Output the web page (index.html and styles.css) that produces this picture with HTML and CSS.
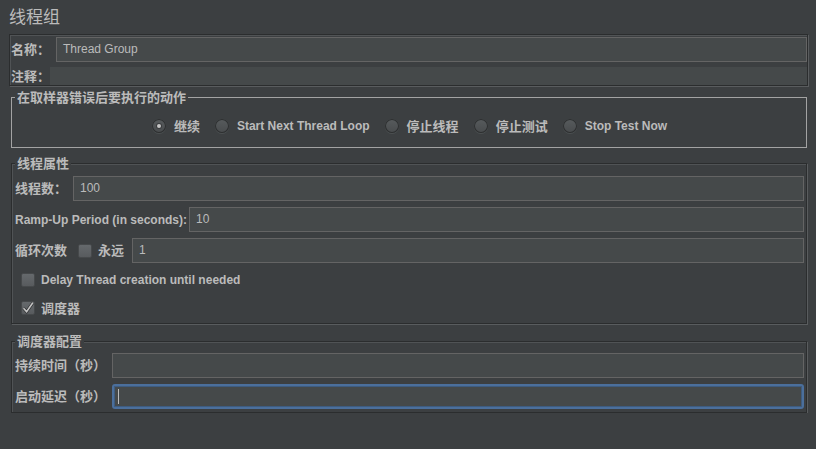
FILE: index.html
```html
<!DOCTYPE html>
<html lang="zh-CN">
<head>
<meta charset="UTF-8">
<title>线程组</title>
<link rel="stylesheet" href="styles.css">
</head>
<body>
<div class="page">
    <h1 class="title">线程组</h1>

    <div class="name-panel">
        <div class="row name-row">
            <span class="label name-label">名称：</span>
            <div class="field">Thread Group</div>
        </div>
        <div class="row comment-row">
            <span class="label comment-label">注释：</span>
            <div class="comment-field"></div>
        </div>
    </div>

    <fieldset class="group group-light on-error">
        <legend>在取样器错误后要执行的动作</legend>
        <div class="radio-row">
            <span class="option"><span class="radio on"></span><span class="cjk">继续</span></span>
            <span class="option"><span class="radio"></span><span class="en">Start Next Thread Loop</span></span>
            <span class="option"><span class="radio"></span><span class="cjk">停止线程</span></span>
            <span class="option"><span class="radio"></span><span class="cjk">停止测试</span></span>
            <span class="option"><span class="radio"></span><span class="en">Stop Test Now</span></span>
        </div>
    </fieldset>

    <fieldset class="group group-etched thread-props">
        <legend>线程属性</legend>
        <div class="row">
            <span class="label">线程数：</span>
            <div class="field">100</div>
        </div>
        <div class="row">
            <span class="en ramp-label">Ramp-Up Period (in seconds):</span>
            <div class="field">10</div>
        </div>
        <div class="row">
            <span class="label">循环次数</span>
            <span class="check loop-check"></span>
            <span class="label forever">永远</span>
            <div class="field">1</div>
        </div>
        <div class="check-row delay-row">
            <span class="check"></span>
            <span class="en">Delay Thread creation until needed</span>
        </div>
        <div class="check-row scheduler-row">
            <span class="check checked">
                <svg width="14" height="14" viewBox="0 0 14 14">
                    <path d="M2.5 7.2 L5.6 10.6 L11.8 1.8" fill="none" stroke="#2e3031" stroke-width="3"/>
                    <path d="M2.5 7.2 L5.6 10.6 L11.8 1.8" fill="none" stroke="#c4c4c4" stroke-width="1.6"/>
                </svg>
            </span>
            <span class="cjk">调度器</span>
        </div>
    </fieldset>

    <fieldset class="group group-etched scheduler">
        <legend>调度器配置</legend>
        <div class="row">
            <span class="label">持续时间（秒）</span>
            <div class="field"></div>
        </div>
        <div class="row">
            <span class="label">启动延迟（秒）</span>
            <div class="field focused"><span class="caret"></span></div>
        </div>
    </fieldset>
</div>
</body>
</html>
```

FILE: styles.css
```css
body {
    margin: 0;
    background-color: #3c3f41;
    color: #bbbbbb;
    font-family: "Noto Sans CJK SC", "Liberation Sans", sans-serif;
    font-size: 13px;
    font-weight: bold;
}
.page {
    width: 799px;
    padding: 5px 0 0 9px;
}
.title {
    margin: 0 0 7px 0;
    font-size: 17px;
    font-weight: normal;
    line-height: 22px;
}

/* panel nombre / comentario */
.name-panel {
    border: 1px solid #2b2d2e;
    box-shadow: 1px 1px 0 #595c5e, inset 1px 1px 0 #505355;
    padding: 2px 0 0 1px;
}
.row {
    display: flex;
    align-items: center;
    gap: 6px;
    height: 25px;
}
.name-row {
    gap: 0;
}
.name-label {
    width: 45px;
}
.comment-row {
    height: 18px;
    margin-top: 5px;
    gap: 0;
}
.comment-label {
    width: 39px;
}
.comment-field {
    flex: 1;
    height: 18px;
    background-color: #45494a;
}
/* el texto CJK queda algo bajo, se sube un poco */
.label,
.cjk {
    white-space: nowrap;
    padding-bottom: 2px;
}
.en {
    font-family: "Liberation Sans", "Noto Sans CJK SC", sans-serif;
    font-size: 12px;
    white-space: nowrap;
}
.ramp-label {
    width: 168px;
}
.field {
    flex: 1;
    box-sizing: border-box;
    height: 25px;
    background-color: #45494a;
    border: 1px solid #646464;
    padding: 0 6px;
    line-height: 23px;
    font-family: "Liberation Sans", sans-serif;
    font-size: 12px;
    font-weight: normal;
    color: #bbbbbb;
}
.field.focused {
    border: 2px solid #4b6f9c;
    border-radius: 3px;
    box-shadow: inset 0 0 0 1px #3e5c80;
    padding: 0 4px;
    display: flex;
    align-items: center;
}
.caret {
    width: 1px;
    height: 15px;
    background-color: #bbbbbb;
}

/* grupos con titulo */
.group {
    margin: 0 1px 0 2px;
    padding: 0 2px 0 3px;
    min-width: 0;
}
.group legend {
    padding: 0 2px;
    line-height: 14px;
    background-color: #3c3f41;
}
.group-light {
    border: 1px solid #a3a3a3;
}
.group-etched {
    border: 1px solid #2b2d2e;
    box-shadow: 1px 1px 0 #595c5e, inset 1px 1px 0 #505355;
}
.on-error {
    margin-top: 4px;
    padding-top: 12px;
    padding-bottom: 11px;
}
.thread-props {
    margin-top: 8px;
    padding-top: 6px;
    padding-bottom: 5px;
}
.thread-props .row + .row {
    margin-top: 6px;
}
.scheduler {
    margin-top: 10px;
    padding-top: 5px;
    padding-bottom: 3px;
}
.scheduler .row + .row {
    margin-top: 6px;
}

/* radios */
.radio-row {
    display: flex;
    justify-content: center;
    align-items: center;
    gap: 15px;
    height: 20px;
}
.option {
    display: flex;
    align-items: center;
    gap: 8px;
}
.radio {
    width: 14px;
    height: 14px;
    border-radius: 50%;
    background: linear-gradient(#575b5d, #484b4d);
    box-shadow: inset 0 0 0 1px #2d2f30, 0 1px 0 #4c5052;
    position: relative;
}
.radio.on::after {
    content: "";
    position: absolute;
    left: 5px;
    top: 5px;
    width: 4px;
    height: 4px;
    border-radius: 50%;
    background-color: #c6c6c6;
    box-shadow: 0 0 0 1px #3a3c3e;
}

/* checkboxes */
.check {
    width: 14px;
    height: 14px;
    box-sizing: border-box;
    border-radius: 2px;
    background: linear-gradient(#65696c, #585b5e);
    border: 1px solid #46494b;
    position: relative;
    flex: none;
}
.check svg {
    position: absolute;
    left: -1px;
    top: -1px;
}
.loop-check {
    margin-left: 5px;
    padding-bottom: 0;
}
.forever {
    margin-right: 2px;
}
.check-row {
    display: flex;
    align-items: center;
    gap: 6px;
    height: 20px;
    padding-left: 6px;
}
.delay-row {
    margin-top: 7px;
}
.scheduler-row {
    margin-top: 8px;
}
```
